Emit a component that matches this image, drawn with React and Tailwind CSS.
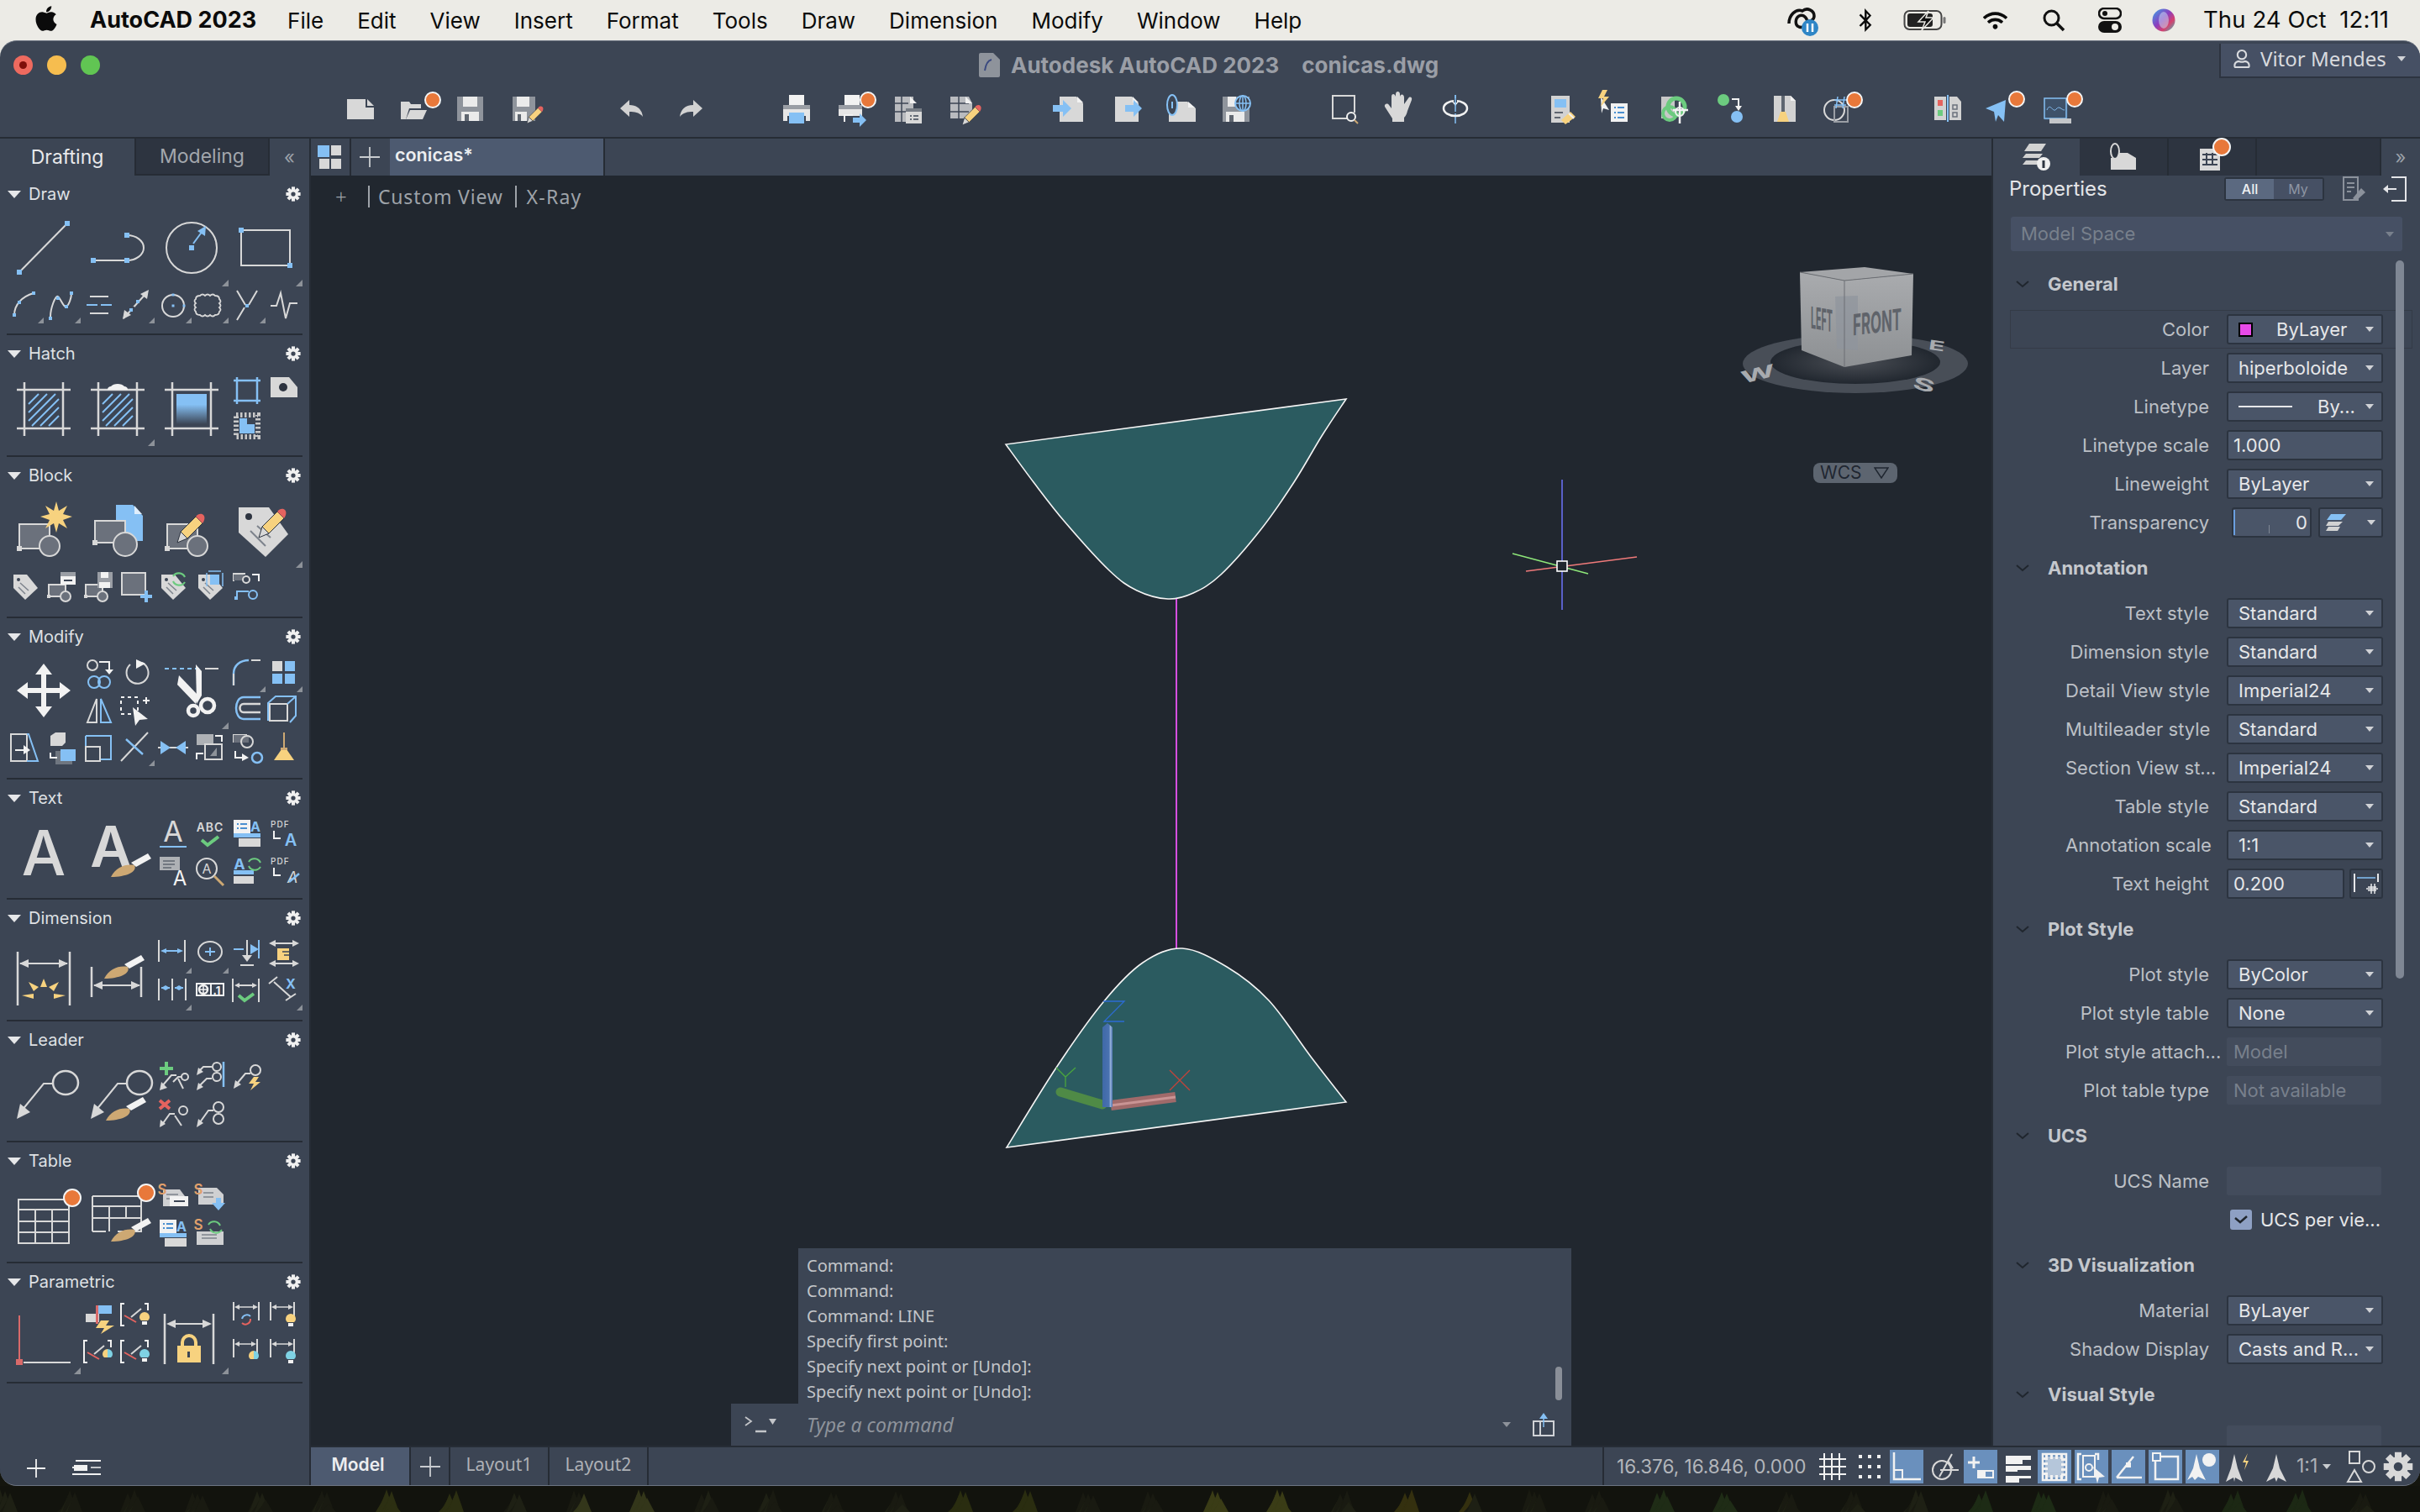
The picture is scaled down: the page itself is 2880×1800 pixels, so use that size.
import { FaApple, FaBluetoothB, FaWifi, FaRegUser } from "react-icons/fa"

const G = "#d8d8d8"
const B = "#85c0f4"
const Y = "#f7d27f"
const O = "#e8783a"
const GR = "#6ccb7f"
const R = "#e5635f"
const T = "#cda873"
const D = "#6b717c"
const W = "#f2f2f2"

const L = (d, c = G, w = 2) => <path d={d} fill="none" stroke={c} strokeWidth={w} />
const F = (d, c = G) => <path d={d} fill={c} />
const Sq = (x, y, c = B, s = 6) => <rect x={x - s / 2} y={y - s / 2} width={s} height={s} fill={c} />
const Ci = (x, y, r, c = G, w = 2, f = "none") => <circle cx={x} cy={y} r={r} fill={f} stroke={c} strokeWidth={w} />
const Rc = (x, y, w, h, c = G) => <rect x={x} y={y} width={w} height={h} fill={c} />
const Dot = (x, y, r = 9) => <circle cx={x} cy={y} r={r} fill={O} stroke="#f4f4f4" strokeWidth="2" />

// pencil pointing down-left, tip at x,y
const Pencil = (x, y, k = 1) => (
  <g transform={`translate(${x} ${y}) scale(${k})`}>
    <path d="M0 0 4-13 12-5Z" fill={G} stroke="#2d3440" strokeWidth="1" />
    <path d="M4-13 22-31 30-23 12-5Z" fill={Y} stroke="#2d3440" strokeWidth="1" />
    <path d="M22-31c3-4 7-4 9-2s2 6-1 10Z" fill={R} />
  </g>
)
const Brush = (x, y, k = 1) => (
  <g transform={`translate(${x} ${y}) scale(${k})`}>
    <path d="M0 0C6-12 18-16 28-14 32-6 18 0 0 0Z" fill={T} />
    <path d="M24-17 44-28 48-22 30-12Z" fill={W} />
  </g>
)
const Tri = <path d="M44 37v7h-7z" fill="#8d9299" />
const TriB = <path d="M88 80v8h-8z" fill="#8d9299" />

function Ic({ s = 44, tri, children }) {
  return (
    <svg width={s} height={s} viewBox={`0 0 ${s} ${s}`} className="block overflow-visible">
      {children}
      {tri && (s === 44 ? Tri : TriB)}
    </svg>
  )
}
function Gear({ s = 18, c = "#f0f0f0" }) {
  return (
    <svg width={s} height={s} viewBox="0 0 24 24" className="block">
      {[0, 45, 90, 135, 180, 225, 270, 315].map((a) => (
        <rect key={a} x="9.300" y="0.500" width="5.400" height="7" fill={c} transform={`rotate(${a} 12 12)`} />
      ))}
      <circle cx="12" cy="12" r="8" fill={c} />
      <circle cx="12" cy="12" r="3.500" fill="#3c4554" />
    </svg>
  )
}
const big = (d, tri) => ({ b: true, d, tri })
const sm = (d, tri) => ({ d, tri })
const gap = { gap: true }

const HFrame = L("M12 21H76M12 67H76M21 12V76M67 12V76", G, 2.5)
const Hatch = (
  <g stroke={B} strokeWidth="2">
    <path d="M26 38 38 26M26 48 48 26M26 58 58 26M30 64 62 32M40 64 62 42M50 64 62 52" />
  </g>
)
const Blk = (
  <>
    <rect x="15" y="36" width="36" height="29" fill={D} stroke={G} strokeWidth="2" />
    {Sq(15, 65, G, 6)}
    {Ci(51, 62, 12, G, 2, D)}
  </>
)
const SBlk = (x, y) => (
  <g transform={`translate(${x} ${y})`}>
    <rect x="0" y="6" width="20" height="14" fill={D} stroke={G} strokeWidth="2" />
    {Sq(0, 20, G, 4)}
    {Ci(20, 20, 6, G, 2, D)}
  </g>
)
const TagS = (
  <>
    {F("M8 8H24L37 24 22 38 8 24Z")}
    {Ci(14, 14, 2, "#3c4554", 0, "#3c4554")}
    {L("M16 18 26 27M14 23 22 31", "#7d838c", 1.5)}
  </>
)
const Bulb = (x, y, c) => (
  <>
    <path d={`M${x - 6} ${y}a6 6 0 0 1 12 0c0 2-1 3-2 4h-8c-1-1-2-2-2-4Z`} fill={c} />
    <rect x={x - 3} y={y + 5} width="6" height="4" fill={W} />
  </>
)
const Conflict = (
  <>
    {L("M8 4H4V30H8M32 4H36V12", W, 2)}
    {L("M8 18 22 26", R, 2)}
    {L("M16 20 28 10", G, 2)}
  </>
)
const Dim = (x1, x2, y = 8, c = G) => (
  <>
    {L(`M${x1} 2V24M${x2} 2V24`, G, 2)}
    {L(`M${x1 + 3} ${y}H${x2 - 3}`, c, 1.5)}
    {F(`M${x1 + 1} ${y} ${x1 + 7} ${y - 3}V${y + 3}Z`, c)}
    {F(`M${x2 - 1} ${y} ${x2 - 7} ${y - 3}V${y + 3}Z`, c)}
  </>
)
const LeaderS = (
  <>
    {L("M8 34 20 20H26", G, 2)}
    {F("M6 38 8 28 15 35Z")}
  </>
)

const panels = [
  {
    name: "Draw",
    h: "h-[190px]",
    cells: [
      big(<>{L("M15 71 72 13")}{Sq(15, 71)}{Sq(72, 13)}</>),
      big(<>{L("M15 57H55")}{L("M55 27a20 15 0 0 1 0 30")}{Sq(15, 57)}{Sq(55, 57)}{Sq(55, 27)}</>),
      big(<>{Ci(44, 42, 30)}{Sq(44, 42)}{L("M46 37 57 22", B)}{F("M61 16 60 28 51 22Z", B)}</>, true),
      big(<>{L("M15 21H73V63H15Z")}{Sq(15, 21)}{Sq(73, 63)}</>, true),
      sm(<>{L("M9 34C9 22 18 12 32 8", G, 2)}{Sq(9, 34, B, 4)}{Sq(15, 19, B, 4)}{Sq(32, 8, B, 4)}</>, true),
      sm(<>{L("M8 36C8 26 14 10 17 12S24 26 27 24 33 14 33 8", G, 2)}{Sq(8, 38, B, 4)}{Sq(17, 14, B, 4)}{Sq(27, 24, B, 4)}{Sq(33, 8, B, 4)}</>, true),
      sm(<>{L("M11 12H33")}{L("M7 22H37", B, 2)}{L("M20 22H24", "#3c4554", 2)}{L("M11 32H33")}</>),
      sm(<>{L("M7 38 35 7")}{F("M37 4 35 15 27 9Z")}{F("M6 39 8 28 16 34Z")}{Sq(17, 27, "#3c4554", 6)}{Sq(16, 28, B, 4)}{Sq(24, 18, B, 4)}</>, true),
      sm(<>{Ci(22, 23, 13)}{Sq(22, 10, B, 3)}{Sq(22, 23, B, 3)}{Sq(35, 23, B, 3)}</>, true),
      sm(<>{L("M10 11q3-3 6 0q3-3 6 0q3-3 6 0q5 0 5 4q3 3 0 5q3 3 0 5q3 3 0 5q0 4-5 4q-3 3-6 0q-3 3-6 0q-3 3-6 0q-5 0-5-4q-3-3 0-5q-3-3 0-5q-3-3 0-5q0-4 5-4Z", G, 1.8)}</>, true),
      sm(<>{L("M10 5 20 22M34 5 24 22M19 25 10 40")}{Sq(22, 23, B, 4)}</>, true),
      sm(<>{L("M6 23H13L18 8 24 38 29 20H38")}</>),
    ],
  },
  {
    name: "Hatch",
    h: "h-[145px]",
    cells: [
      big(<>{HFrame}{Hatch}</>),
      big(<>{HFrame}{Hatch}{F("M32 21c0-3 2-4 4-4 3-4 13-4 16 0 2 0 4 1 4 4Z", W)}</>, true),
      big(
        <>
          <defs>
            <linearGradient id="hg" x1="0" y1="0" x2="0" y2="1">
              <stop offset="0" stopColor="#85c0f4" />
              <stop offset="0.35" stopColor="#85c0f4" />
              <stop offset="1" stopColor="#3c4554" />
            </linearGradient>
          </defs>
          {HFrame}
          <rect x="26" y="26" width="36" height="36" fill="url(#hg)" />
        </>,
      ),
      sm(<>{L("M6 10H38M6 34H38M10 6V38M34 6V38", B, 2.5)}</>),
      sm(<>{F("M6 6H28L38 18V30H6Z")}<circle cx="21" cy="18" r="5" fill="#2d3440" /></>),
      sm(<><rect x="9" y="7" width="26" height="26" fill="none" stroke="#c8c8c8" strokeWidth="6" strokeDasharray="2.500 2.500" />{F("M13 11H22V18H31V29H13Z", B)}</>),
    ],
  },
  {
    name: "Block",
    h: "h-[192px]",
    cells: [
      big(<>{Blk}{F("M59 9 62 20 72 14 67 24 78 27 67 31 72 41 62 35 59 46 56 35 46 41 51 31 40 27 51 24 46 14 56 20Z", Y)}</>),
      big(
        <>
          {F("M42 13H62L74 26V56H42Z", B)}
          {F("M64 14 73 24H64Z", "#dfeefc")}
          <rect x="17" y="32" width="36" height="26" fill={D} stroke={G} strokeWidth="2" />
          {Sq(17, 58, G, 6)}
          {Ci(53, 60, 14, G, 2, D)}
        </>,
      ),
      big(<>{Blk}{Pencil(27, 58, 1)}</>),
      big(
        <>
          {F("M12 16H48L71 48 44 75 12 46Z")}
          {Ci(24, 27, 4, "#2d3440", 0, "#2d3440")}
          {L("M34 38 50 52M26 44 44 62", "#7d838c", 2)}
          {Pencil(36, 52, 1)}
        </>,
        true,
      ),
      sm(TagS),
      sm(<>{SBlk(6, 14)}{Rc(20, 5, 18, 5, "#9a9ea5")}{Rc(20, 10, 18, 10, W)}{L("M24 15H34", "#3c4554", 2)}</>),
      sm(<>{SBlk(6, 14)}{F("M20 5H38V24H20Z", "#9a9ea5")}{Rc(24, 5, 9, 7, W)}{Rc(22, 17, 13, 7, W)}</>),
      sm(<><rect x="5" y="6" width="28" height="26" fill={D} stroke={G} strokeWidth="2" />{F("M27 32H32V27H36V32H41V36H36V41H32V36H27Z", B)}</>),
      sm(<>{TagS}{L("M22 10a8 8 0 0 1 14 1M36 17a8 8 0 0 1-14-1", GR, 2.2)}</>),
      sm(<>{TagS}<rect x="22" y="8" width="11" height="12" fill={B} />{L("M18 6V22M37 6V22M20 4H35", B, 1.5)}</>),
      sm(<>{L("M6 16V7H20", G, 2)}{Rc(6, 8, 12, 7, D)}{Ci(21, 14, 4)}{L("M28 8h8v8", W, 2)}{L("M10 36V28H24", B, 2)}{Ci(29, 32, 5, B)}{Sq(9, 36, B, 4)}</>),
      gap,
    ],
  },
  {
    name: "Modify",
    h: "h-[192px]",
    cells: [
      big(<>{F("M44 10 54 23H47V39H63V32L76 42 63 52V45H47V61H54L44 74 34 61H41V45H25V52L12 42 25 32V39H41V23H34Z", W)}</>),
      sm(<>{Ci(14, 12, 6)}{L("M22 8H34V18", W, 2)}{F("M29 17H39L34 23Z", W)}{Ci(16, 32, 7, B)}{Ci(28, 32, 7, B)}</>),
      sm(<>{L("M29 9a13 13 0 1 1-14 2", G, 2)}{F("M22 5 33 10 22 16Z", W)}</>),
      big(
        <>
          <path d="M12 16H53" stroke={B} strokeWidth="2" strokeDasharray="5 4" />
          {L("M60 16H76", G, 2)}
          {F("M49 11 56 19V48L50 58Z", W)}
          {F("M29 24 52 48 49 58 27 35Z", W)}
          {Ci(46, 66, 6, W, 4.5)}
          {Ci(63, 60, 8, W, 4.5)}
        </>,
        true,
      ),
      sm(<>{L("M6 36V22C6 12 14 6 24 6", B, 2.5)}{L("M6 22V36", G, 2)}{L("M27 6H38", G, 2)}</>, true),
      sm(<>{Rc(8, 7, 12, 12)}{Rc(23, 7, 12, 12, B)}{Rc(8, 22, 12, 12, B)}{Rc(23, 22, 12, 12, B)}</>, true),
      sm(<>{L("M19 8 8 36H19Z")}{L("M24 8 36 36H24Z", B)}</>),
      sm(<><path d="M4 6H24V26H4Z" fill="none" stroke={W} strokeWidth="2" strokeDasharray="4 4" />{F("M18 18 36 32 26 33 21 40Z", W)}{L("M30 10H38M34 6V14", W, 2)}</>),
      sm(<>{L("M38 6H18C6 6 6 32 18 32H38", B, 2.5)}{L("M38 14H18C12 14 12 24 18 24H38", G, 2.5)}</>),
      sm(<>{L("M5 14H26V34H5Z", G, 2)}{L("M3 34V13L12 5H36V28L29 36M26 14 36 5", B, 2)}</>),
      sm(<>{L("M5 6H24V38H5Z", G, 2)}{L("M24 6H26L37 38H24", B, 2)}{L("M10 25H22", W, 2)}{F("M20 19 28 25 20 30Z", W)}</>),
      sm(<>{F("M8 8 14 4H26V16L22 20H8Z", G)}{F("M14 26H34V42H14Z", "#6f7680")}{Rc(20, 24, 18, 14, B)}{L("M8 28V34H16", W, 2)}</>),
      sm(<>{L("M6 8H36V36H24", B, 2)}{L("M6 24V8", B, 2)}{L("M6 21H23V38H6Z")}</>),
      sm(<>{L("M4 38 36 4")}{L("M10 12 30 30", B, 2.5)}</>, true),
      sm(<>{L("M4 22H40")}{F("M7 14 19 22 7 30Z", B)}{F("M37 14 25 22 37 30Z", B)}</>),
      sm(<>{Rc(6, 6, 20, 13, "#aeb1b5")}{L("M16 18H36V36H16Z")}{F("M22 32 30 22V32Z", "#8d9299")}{L("M28 8H36V15", W, 2)}{L("M6 36V29H14", W, 2)}</>),
      sm(<>{L("M6 16V7H22", G, 2)}{Rc(6, 7, 18, 9, D)}{Ci(22, 15, 7)}{L("M8 26V34H18", W, 2)}{F("M16 29 24 34 16 38Z", W)}{Ci(34, 34, 6, B, 2.5)}</>),
      sm(<>{Rc(21, 4, 2, 20, T)}{F("M19 24H25L34 37H10Z", Y)}{Rc(18, 22, 8, 3, T)}</>),
    ],
  },
  {
    name: "Text",
    h: "h-[143px]",
    cells: [
      big(<><text x="44" y="70" textAnchor="middle" fontFamily="Inter" fontWeight="500" fontSize="74" fill={G}>A</text></>),
      big(<><text x="36" y="60" textAnchor="middle" fontFamily="Inter" fontWeight="600" fontSize="68" fill={G}>A</text>{Brush(36, 72, 1)}</>),
      sm(<><text x="22" y="30" textAnchor="middle" fontFamily="Inter" fontSize="34" fill={G}>A</text>{L("M6 36H38", B, 2)}</>),
      sm(<><text x="22" y="18" textAnchor="middle" fontFamily="Inter" fontWeight="600" fontSize="14" letterSpacing="1" fill={G}>ABC</text>{L("M12 28 19 34 32 24", GR, 4)}</>),
      sm(<>{Rc(6, 4, 20, 16, W)}{L("M10 9H12M14 9H22M10 14H12M14 14H22", "#4a8fd0", 2)}<text x="32" y="18" textAnchor="middle" fontFamily="Inter" fontWeight="700" fontSize="16" fill={B}>A</text>{Rc(6, 20, 32, 5, B)}{Rc(12, 26, 26, 10)}</>),
      sm(<><text x="6" y="13" fontFamily="Inter" fontWeight="500" fontSize="10" letterSpacing="1" fill={G}>PDF</text>{L("M10 17V26H18", W, 2)}<text x="30" y="35" textAnchor="middle" fontFamily="Inter" fontWeight="600" fontSize="20" fill={B}>A</text></>),
      sm(<>{Rc(6, 4, 24, 16, "#aeb1b5")}{L("M10 9H24M10 13H24M10 17H20", "#5f6670", 1.5)}<text x="30" y="38" textAnchor="middle" fontFamily="Inter" fontSize="24" fill={W}>A</text></>),
      sm(<>{Ci(18, 18, 12)}<text x="18" y="24" textAnchor="middle" fontFamily="Inter" fontSize="16" fill={G}>A</text>{L("M27 27 38 38", T, 3)}</>),
      sm(<><text x="13" y="19" textAnchor="middle" fontFamily="Inter" fontWeight="700" fontSize="18" fill={B}>A</text>{Rc(6, 20, 24, 5, B)}{Rc(6, 27, 24, 9)}{L("M24 10a8 8 0 0 1 14 1M38 16a8 8 0 0 1-14-1", GR, 2)}</>),
      sm(<><text x="6" y="13" fontFamily="Inter" fontWeight="500" fontSize="10" letterSpacing="1" fill={G}>PDF</text>{L("M10 17V26H18", W, 2)}<text x="26" y="35" fontFamily="Inter" fontStyle="italic" fontSize="18" fill={G}>A</text>{L("M28 34 40 24", B, 2.5)}</>),
    ],
  },
  {
    name: "Dimension",
    h: "h-[145px]",
    cells: [
      big(
        <>
          {L("M13 18V82M75 18V82", G, 2.5)}
          {L("M16 32H72")}
          {F("M15 32 26 27V37Z")}
          {F("M73 32 62 27V37Z")}
          {F("M44 50 48 60H40Z", Y)}
          {F("M26 54 38 60 32 65Z", Y)}
          {F("M62 54 50 60 56 65Z", Y)}
          {F("M18 70 32 68V74Z", Y)}
          {F("M70 70 56 68V74Z", Y)}
        </>,
      ),
      big(<>{L("M13 36V72M72 36V72", G, 2.5)}{L("M16 58H70")}{F("M15 58 26 53V63Z")}{F("M71 58 60 53V63Z")}{Brush(28, 50, 1)}</>),
      sm(<>{L("M5 4V30M36 4V30", G, 2)}{L("M9 17H32", B, 2)}{F("M7 17 14 14V20Z", B)}{F("M34 17 27 14V20Z", B)}</>, true),
      sm(<><ellipse cx="22" cy="18" rx="14" ry="12" fill="none" stroke={G} strokeWidth="2" />{L("M16 18H28M22 13V23", B, 2)}</>, true),
      sm(<>{L("M6 15H18M36 4V26", B, 2)}{L("M22 4V26", G, 2)}{F("M26 9 36 15 26 21Z", B)}{F("M16 22H28L22 30Z")}{L("M14 34H30")}</>),
      sm(<>{L("M6 8H38M6 32H38", G, 2)}{F("M4 8 12 4V12Z")}{F("M40 8 32 4V12Z")}{F("M4 32 12 28V36Z")}{F("M40 32 32 28V36Z")}{Rc(14, 14, 14, 14, Y)}{L("M20 18H28M22 22H28", "#3c4554", 1.5)}</>),
      sm(<>{L("M5 6V32M21 6V32M37 6V32", G, 2)}{L("M8 17H18M24 17H34", B, 2)}{F("M8 17 13 14V20Z", B)}{F("M18 17 13 14V20Z", B)}{F("M24 17 29 14V20Z", B)}{F("M34 17 29 14V20Z", B)}</>, true),
      sm(<><rect x="6" y="12" width="32" height="14" fill="none" stroke={W} strokeWidth="2" />{L("M23 12V26", W, 2)}{Ci(14, 19, 5, W, 2.5)}{L("M8 19H20M14 13V25", W, 1.5)}<text x="30" y="25" textAnchor="middle" fontFamily="Inter" fontWeight="700" fontSize="13" fill={W}>.1</text></>),
      sm(<>{L("M5 6V34M36 6V34", G, 2)}{L("M9 14H32")}{F("M7 14 13 11V17Z")}{F("M34 14 28 11V17Z")}{L("M12 26 19 32 30 24", GR, 4)}</>),
      sm(<>{L("M4 12 14 4M24 32 36 24M10 10 30 28", G, 2)}<text x="30" y="18" textAnchor="middle" fontFamily="Inter" fontWeight="700" fontSize="16" fill={B}>X</text></>, true),
    ],
  },
  {
    name: "Leader",
    h: "h-[144px]",
    cells: [
      big(<>{L("M18 62 44 30H56")}{F("M12 72 16 54 28 64Z")}<ellipse cx="70" cy="29" rx="15" ry="14" fill="none" stroke={G} strokeWidth="2.5" /></>),
      big(<>{L("M18 62 44 30H56")}{F("M12 72 16 54 28 64Z")}<ellipse cx="70" cy="29" rx="15" ry="14" fill="none" stroke={G} strokeWidth="2.5" />{Brush(30, 74, 1)}</>),
      sm(<>{L("M6 12H22M14 4V20", GR, 4)}{LeaderS}{L("M22 28 28 22H32")}{Ci(36, 22, 4)}{L("M28 24 34 36")}</>),
      sm(<>{L("M10 14 14 10H24")}{F("M6 20 8 11 14 16Z")}{L("M10 32 18 24H24")}{F("M6 38 8 29 14 34Z")}{Ci(30, 10, 5)}{Ci(30, 22, 5)}{L("M38 4V34", B, 2.5)}</>),
      sm(<>{L("M10 30 20 18H26")}{F("M6 36 8 26 15 31Z")}{Ci(32, 14, 6)}{F("M30 22 36 22 32 28H38L26 38 30 30H24Z", Y)}</>),
      gap,
      sm(<>{L("M6 6 18 16M18 6 6 16", R, 4)}{L("M8 36 18 22H24")}{F("M6 38 7 29 13 34Z")}{Ci(34, 18, 5)}{L("M24 24 32 36")}</>),
      sm(<>{L("M10 32 20 18H26")}{F("M6 38 8 28 14 33Z")}{Ci(32, 14, 6)}{Ci(32, 28, 6)}</>),
    ],
  },
  {
    name: "Table",
    h: "h-[144px]",
    cells: [
      big(<>{L("M14 24H74V76H14ZM14 36H74M14 50H74M14 63H74M34 36V76M54 36V76", G, 2)}{Dot(78, 22, 10)}</>),
      big(<>{L("M14 20H72V62H44M14 62H30M14 20V62M14 32H72M14 46H72M34 32V62M54 32V46", G, 2)}{Dot(78, 16, 10)}{Brush(36, 74, 1)}</>),
      sm(<>{F("M10 12H30L36 20V32H10Z", "#cfd0d2")}{L("M14 18H28M14 23H28", "#7d838c", 1.5)}<text x="9" y="18" textAnchor="middle" fontFamily="Inter" fontWeight="600" fontSize="17" fill="#e0a06b">S</text>{Rc(18, 20, 22, 12, W)}{L("M23 26H36", "#3c4554", 2)}</>),
      sm(<>{F("M8 10H30L38 18V30H8Z", "#cfd0d2")}{L("M14 16H26M14 21H26", "#7d838c", 1.5)}<text x="8" y="18" textAnchor="middle" fontFamily="Inter" fontWeight="600" fontSize="17" fill="#e0a06b">S</text>{F("M29 22H35V28H40L32 37 24 28H29Z", B)}</>),
      gap,
      gap,
      sm(<>{Rc(6, 4, 20, 16, W)}{L("M10 9H12M14 9H22M10 14H12M14 14H22", "#4a8fd0", 2)}<text x="32" y="18" textAnchor="middle" fontFamily="Inter" fontWeight="700" fontSize="16" fill={B}>A</text>{Rc(6, 20, 32, 5, B)}{Rc(12, 26, 26, 10)}</>),
      sm(<>{F("M6 18H38V34H6Z", "#cfd0d2")}{L("M12 22H30M12 26H30", "#7d838c", 1.5)}<text x="8" y="16" textAnchor="middle" fontFamily="Inter" fontWeight="600" fontSize="17" fill="#e0a06b">S</text>{L("M20 10a8 8 0 0 1 14 1M36 16a8 8 0 0 1-14-1", GR, 2)}</>),
    ],
  },
  {
    name: "Parametric",
    h: "h-[143px]",
    cells: [
      big(<>{Rc(14, 18, 2, 56, "#d96a6a")}{Rc(11, 70, 8, 7, "#d96a6a")}{L("M20 74H76")}</>, true),
      sm(<>{Rc(6, 16, 16, 10)}{Rc(18, 6, 3, 22, "#d96a6a")}{Rc(21, 6, 16, 10, B)}{F("M24 24H34L30 30H40L24 40 28 33H18Z", Y)}</>),
      sm(<>{Conflict}{Bulb(32, 20, Y)}</>),
      big(
        <>
          {L("M12 16V76M70 16V76", G, 2.5)}
          {L("M16 28H66")}
          {F("M14 28 25 23V33Z")}
          {F("M68 28 57 23V33Z")}
          <path d="M33 56v-6a8 8 0 0 1 16 0v6" fill="none" stroke={Y} strokeWidth="4" />
          <rect x="27" y="54" width="28" height="20" fill={Y} />
          <rect x="39" y="61" width="3" height="7" fill="#3c4554" />
        </>,
        true,
      ),
      sm(<>{Dim(6, 36)}{L("M16 22a6 6 0 0 1 10-3", B, 2)}{L("M26 22a6 6 0 0 1-10 5", R, 2)}</>),
      sm(<>{Dim(6, 34)}{Bulb(30, 22, Y)}</>),
      sm(<>{Conflict}<path d="M32 14a6 6 0 0 0-6 6c0 2 1 3 2 4h4Z" fill={Y} /><path d="M32 14a6 6 0 0 1 6 6c0 2-1 3-2 4h-4Z" fill="#7fd2e4" /></>),
      sm(<>{Conflict}{Bulb(32, 20, "#7fd2e4")}</>),
      sm(<>{Dim(6, 34)}<path d="M30 16a6 6 0 0 0-6 6c0 2 1 3 2 4h4Z" fill={Y} /><path d="M30 16a6 6 0 0 1 6 6c0 2-1 3-2 4h-4Z" fill="#7fd2e4" /></>),
      sm(<>{Dim(6, 34)}{Bulb(30, 22, "#7fd2e4")}</>),
    ],
  },
]

function PanelHead({ name }) {
  return (
    <div className="flex h-[44px] items-center justify-between pl-[9px] pr-[10px]">
      <div className="flex items-center gap-[9px]">
        <span className="block h-0 w-0 border-x-[8px] border-t-[9px] border-x-transparent border-t-[#e6e7e9]"></span>
        <span className="text-[20px] text-[#dfe1e4]">{name}</span>
      </div>
      <Gear />
    </div>
  )
}

function LeftPanel() {
  return (
    <div className="flex w-[368px] shrink-0 flex-col rounded-bl-[20px] bg-[#3c4554]">
      <div className="flex h-[44px] shrink-0">
        <div className="flex w-[160px] items-center justify-center text-[23px] text-[#e8e9eb]">Drafting</div>
        <div className="flex w-[161px] items-center justify-center border-x-2 border-b-2 border-[#262c35] bg-[#2d3440] text-[23px] text-[#a3a7ad]">Modeling</div>
        <div className="flex flex-1 items-center justify-center text-[22px] text-[#9aa0a8]">«</div>
      </div>
      {panels.map((p) => (
        <div key={p.name} className={`mx-[8px] shrink-0 border-b-2 border-[#262c35] ${p.h}`}>
          <div className="-mx-[8px]">
            <PanelHead name={p.name} />
          </div>
          <div className="grid w-[352px] grid-cols-[repeat(8,44px)] auto-rows-[44px]">
            {p.cells.map((c, i) =>
              c.gap ? (
                <div key={i}></div>
              ) : (
                <div key={i} className={c.b ? "col-span-2 row-span-2" : ""}>
                  <Ic s={c.b ? 88 : 44} tri={c.tri}>
                    {c.d}
                  </Ic>
                </div>
              ),
            )}
          </div>
        </div>
      ))}
      <div className="flex flex-1 items-end pb-[7px] pl-[30px]">
        <svg width="100" height="26" viewBox="0 0 100 26" className="block">
          {L("M2 13H24M13 2V24", W, 1.8)}
          {L("M60 4H90M56 12H74", W, 2)}
          {Rc(58, 9, 16, 7, W)}
          {L("M56 20H90", W, 2)}
          {L("M78 12H90", W, 1.5)}
        </svg>
      </div>
    </div>
  )
}

const toolbarGroups = [
  [
    <>{F("M18 17H40V27H50V41H18Z")}{F("M42 17 50 25H42Z")}</>,
    <>{F("M16 20H26L28 23H40V28H26L22 41H16Z")}{F("M27 30H47L42 41H22Z")}{Dot(54, 18)}</>,
    <>{F("M17 14H48V43H17Z", "#8f949c")}{Rc(24, 14, 17, 12, "#ebebeb")}{Rc(22, 32, 21, 11, "#ebebeb")}{Rc(26, 35, 5, 8, "#5f6670")}</>,
    <>{F("M17 14H44V43H17Z", "#8f949c")}{Rc(22, 14, 15, 12, "#ebebeb")}{Rc(20, 32, 14, 11, "#ebebeb")}{Rc(23, 35, 4, 8, "#5f6670")}{Pencil(34, 46, 0.6)}</>,
  ],
  [
    F("M17 28 28 18V24C38 24 43 30 44 38 40 33 35 32 28 32V38Z", "#d2d2d2"),
    <g transform="matrix(-1 0 0 1 66 0)">{F("M17 28 28 18V24C38 24 43 30 44 38 40 33 35 32 28 32V38Z", "#d2d2d2")}</g>,
  ],
  [
    <>{Rc(24, 12, 18, 12, W)}{Rc(17, 24, 32, 5, "#9a9ea5")}{Rc(17, 29, 32, 8, "#e6e6e6")}{Rc(17, 37, 5, 6, "#e6e6e6")}{Rc(44, 37, 5, 6, "#e6e6e6")}{Rc(24, 33, 18, 13, B)}</>,
    <>{Rc(24, 12, 18, 12, W)}{Rc(17, 24, 28, 5, "#9a9ea5")}{Rc(17, 29, 28, 8, "#e6e6e6")}{L("M24 44V36H34", W, 2)}{F("M34 39H42V34L50 42 42 50V45H34Z", B)}{Dot(52, 18)}</>,
    <>{F("M18 14H40V33H34V44H18Z", "#b9bbbf")}{L("M18 22H34M18 32H34M26 14V44", "#3c4554", 1.5)}{F("M36 14 44 22H36Z", W)}{F("M31 28H50V46H31Z", "#d8d8d8")}{Rc(31, 28, 19, 4, "#777d86")}{L("M36 37H38M40 37H46M36 41H38M40 41H46", "#3c4554", 1.5)}</>,
    <>{F("M18 14H40L44 22V40H18Z", "#b9bbbf")}{L("M18 22H40M18 32H40M28 14V44", "#3c4554", 1.5)}{F("M36 14 44 22H36Z", W)}{Pencil(32, 48, 0.7)}</>,
  ],
  [
    <>{F("M20 14H40L48 22V44H20Z")}{F("M41 14 48 21H41Z", W)}{F("M12 24H24V18L34 28 24 38V32H12Z", B)}</>,
    <>{F("M20 14H40L48 22V44H20Z")}{F("M41 14 48 21H41Z", W)}{F("M32 24H42V18L52 28 42 38V32H32Z", B)}</>,
    <>{F("M24 20H40L50 28V44H18V30H24Z")}{F("M41 20 49 27H41Z", W)}<ellipse cx="22" cy="24" rx="6" ry="12" fill="#3c4554" stroke={B} strokeWidth="2" />{L("M22 20V28", B, 2)}</>,
    <>{F("M16 14H48V44H16Z", "#8f949c")}{Rc(22, 14, 10, 12, "#ebebeb")}{Rc(20, 32, 22, 12, "#ebebeb")}{Rc(24, 36, 5, 8, "#5f6670")}{Ci(40, 22, 9, B, 2, "#3c4554")}{L("M31 22H49M40 13V31", B, 1.5)}<ellipse cx="40" cy="22" rx="4" ry="9" fill="none" stroke={B} strokeWidth="1.5" /></>,
  ],
  [
    <>{L("M36 40H19V13H45V33", G, 2)}{Ci(41, 38, 5, W, 2)}{L("M45 42 49 46", T, 2)}</>,
    <path d="M24 40 15 26c-1-3 3-5 5-2l3 4V14c0-4 4-4 5 0v-3c0-4 5-4 5 0v3c1-4 5-3 5 1v8l5-7c2-3 5-1 4 2l-5 13c-1 4-2 6-4 8v5H24Z" fill="#d8d8d8" />,
    <>{L("M33 12V22M33 34V46", B, 1.5)}<ellipse cx="33" cy="28" rx="14" ry="9" fill="none" stroke={W} strokeWidth="2.5" />{F("M29 20 37 20 33 25Z", W)}{Rc(31, 16, 4, 5, "#3c4554")}{L("M33 12V32", B, 1.5)}</>,
  ],
  [
    <>{F("M19 13H41V45H19Z", "#d2d2d2")}{Rc(23, 17, 14, 10, B)}{L("M23 33H33M23 39H30", "#5f6670", 2)}{F("M36 47 31 42 42 32 48 38Z", Y)}{L("M40 34 46 40", W, 2)}</>,
    <>{F("M12 14 22 30 15 28 13 34Z", W)}{F("M14 6 20 6 16 14 22 14 12 26 15 16H9Z", Y)}{F("M24 22H44V44H24Z", W)}{L("M28 27H30M32 27H40M28 33H30M32 33H40M28 39H30M32 39H40", "#4a8fd0", 2)}</>,
    <>{F("M18 14H34V40H18Z", "#c8c8c8")}{Ci(36, 26, 10, GR, 5)}{Ci(28, 34, 8, GR, 4)}{L("M32 30H50M40 20V46", W, 2.5)}{Ci(40, 32, 5, W, 2)}</>,
    <>{Ci(26, 18, 7, GR, 0, GR)}{Ci(42, 38, 7, B, 0, B)}{L("M36 17H44V26", W, 2)}{F("M40 25H48L44 31Z", W)}</>,
    <>{F("M20 13H40L46 19V44H20Z", "#d2d2d2")}{F("M40 13 46 19H40Z", W)}{Rc(29, 13, 4, 20, "#5f6670")}{F("M28 32H34L38 44H24Z", Y)}</>,
    <>{Ci(26, 30, 12, G, 2)}{L("M26 26H42V44H26Z", "#9a9ea5", 2)}{L("M30 14 28 28M38 14 36 28M26 18H40M26 24H40", B, 1.5)}{Dot(50, 18)}</>,
  ],
  [
    <>{F("M17 14H31V42H17Z", "#d2d2d2")}{F("M35 14H44L49 20V42H35Z", "#d2d2d2")}{L("M33 12V44", B, 2)}{Rc(21, 18, 6, 7, R)}{Rc(21, 30, 6, 7, GR)}{L("M39 24H44V29H39ZM39 33H44V38H39Z", "#6b717c", 1.5)}</>,
    <>{F("M12 28 36 18 34 44 27 36 24 44 22 32Z", B)}{Dot(49, 17)}</>,
    <>{Rc(16, 16, 28, 26, "#3e5169")}<rect x="16" y="16" width="26" height="24" fill="#3e5169" stroke={B} strokeWidth="1.5" />{L("M19 30C23 20 26 34 30 29S36 30 40 30", B, 1)}{Rc(22, 40, 26, 6, "#c4c6c9")}{Dot(52, 17)}</>,
  ],
]

function Toolbar() {
  return (
    <div className="flex h-[62px] shrink-0 gap-[62px] pl-[395px]">
      {toolbarGroups.map((g, i) => (
        <div key={i} className="flex">
          {g.map((d, j) => (
            <svg key={j} width="66" height="56" viewBox="0 0 66 56" className="block overflow-visible">
              {d}
            </svg>
          ))}
        </div>
      ))}
    </div>
  )
}

function Caret({ c = "border-t-[#d0d2d6]" }) {
  return <span className={`block h-0 w-0 border-x-[5px] border-t-[6px] border-x-transparent ${c}`}></span>
}

function MacBar() {
  const items = ["File", "Edit", "View", "Insert", "Format", "Tools", "Draw", "Dimension", "Modify", "Window", "Help"]
  return (
    <div className="flex h-[48px] shrink-0 items-center bg-[#ecebe6] pl-[38px] text-[26px] text-[#0b0b0b]">
      <FaApple className="text-[34px] -mt-[4px]" />
      <span className="ml-[35px] text-[27px] font-bold">AutoCAD 2023</span>
      <div className="ml-[37px] flex gap-[40px]">
        {items.map((m) => (
          <span key={m}>{m}</span>
        ))}
      </div>
      <div className="ml-auto flex items-center pr-[37px]">
        <svg width="46" height="40" viewBox="0 0 46 40" className="block">
          <path d="M6 24c0-10 8-18 16-15 6-5 14 0 14 6 0 4-4 7-8 6-2-6-6-8-10-6-5 3-5 11 0 13 3 1 6 0 8-2" fill="none" stroke="#111" strokeWidth="3.5" />
          <circle cx="31" cy="29" r="10" fill="#2f86c6" />
          <path d="M28 24v10M34 24v10" stroke="#fff" strokeWidth="2.5" />
        </svg>
        <span className="ml-[37px] flex w-[28px] justify-center">
          <FaBluetoothB className="text-[28px]" />
        </span>
        <svg width="52" height="26" viewBox="0 0 52 26" className="ml-[31px] block">
          <rect x="1.5" y="2" width="44" height="22" rx="6" fill="none" stroke="#444" strokeWidth="2" />
          <rect x="5" y="5" width="30" height="16" rx="3" fill="#222" />
          <path d="M30 2 18 15H26L22 25 36 10H27Z" fill="#111" stroke="#ecebe6" strokeWidth="1.5" />
          <rect x="47.5" y="9" width="3" height="8" rx="1.5" fill="#777" />
        </svg>
        <span className="ml-[42px] flex w-[32px] justify-center">
          <FaWifi className="text-[29px]" />
        </span>
        <svg width="28" height="28" viewBox="0 0 28 28" className="ml-[39px] block">
          <circle cx="11.5" cy="11.5" r="8.5" fill="none" stroke="#111" strokeWidth="3" />
          <path d="M18 18 26 26" stroke="#111" strokeWidth="3.5" />
        </svg>
        <svg width="28" height="30" viewBox="0 0 28 30" className="ml-[39px] block">
          <rect x="1" y="1" width="26" height="12" rx="6" fill="none" stroke="#111" strokeWidth="2.5" />
          <circle cx="8" cy="7" r="3" fill="#111" />
          <rect x="0" y="16" width="28" height="14" rx="7" fill="#111" />
          <circle cx="20" cy="23" r="4" fill="#ecebe6" />
        </svg>
        <svg width="28" height="28" viewBox="0 0 28 28" className="ml-[36px] block">
          <defs>
            <linearGradient id="si" x1="0" y1="0" x2="1" y2="1">
              <stop offset="0" stopColor="#3aa7e8" />
              <stop offset="0.45" stopColor="#8a3fc0" />
              <stop offset="0.7" stopColor="#d6406e" />
              <stop offset="1" stopColor="#35c3c0" />
            </linearGradient>
          </defs>
          <circle cx="14" cy="14" r="13.5" fill="url(#si)" />
          <ellipse cx="14" cy="14" rx="6" ry="10" fill="#cfe3f5" opacity=".5" />
        </svg>
        <span className="ml-[33px] whitespace-pre text-[27.500px] tracking-[0.1px]">Thu 24 Oct  12:11</span>
      </div>
    </div>
  )
}

function TitleRow() {
  return (
    <div className="relative flex h-[52px] shrink-0 items-center pt-[5px]">
      <div className="absolute left-[16px] top-[17px] flex gap-[17px]">
        <span className="flex h-[23px] w-[23px] items-center justify-center rounded-full bg-[#ee6a5f]">
          <span className="h-[9px] w-[9px] rounded-full bg-[#7e0f0a]"></span>
        </span>
        <span className="h-[23px] w-[23px] rounded-full bg-[#f6bd4f]"></span>
        <span className="h-[23px] w-[23px] rounded-full bg-[#61c553]"></span>
      </div>
      <div className="ml-[1165px] flex items-center text-[26px] font-bold text-[#9a9ea6]">
        <svg width="25" height="29" viewBox="0 0 25 29" className="block">
          <path d="M2 0H17L25 8V27A2 2 0 0 1 23 29H2A2 2 0 0 1 0 27V2A2 2 0 0 1 2 0Z" fill="#8e939b" />
          <path d="M7 21C8 14 11 9 15 8" fill="none" stroke="#3b4a80" strokeWidth="2" />
        </svg>
        <span className="ml-[13px]">Autodesk AutoCAD 2023</span>
        <span className="ml-[27px]">conicas.dwg</span>
      </div>
      <div className="absolute right-0 top-[3px] flex h-[41px] w-[239px] items-center border-b-2 border-l-2 border-[#2d3440] bg-[#465064] pb-[3px] pl-[14px] [font-family:'Noto_Sans',sans-serif] text-[24px] text-[#d8dade]">
        <FaRegUser className="text-[22px] text-[#d8dade]" />
        <span className="ml-[11px]">Vitor Mendes</span>
        <span className="ml-[13px]">
          <Caret />
        </span>
      </div>
    </div>
  )
}

function DocTabs() {
  return (
    <div className="flex h-[44px] shrink-0 bg-[#3c4554]">
      <div className="flex w-[48px] items-center justify-center border-r-2 border-[#262c35] pr-[2px]">
        <svg width="28" height="28" viewBox="0 0 28 28" className="block">
          {Rc(0, 0, 14, 14, B)}
          {Rc(16, 0, 12, 12, G)}
          {Rc(2, 16, 12, 12, G)}
          {Rc(16, 16, 12, 12, G)}
        </svg>
      </div>
      <div className="flex w-[46px] items-center justify-center pr-[2px]">
        <svg width="24" height="24" viewBox="0 0 24 24" className="block">
          {L("M0 12H24M12 0V24", "#c9ccd0", 1.8)}
        </svg>
      </div>
      <div className="flex w-[256px] items-center border-r-2 border-[#262c35] bg-[#4d5a70] pb-[6px] pl-[6px] text-[21.500px] font-semibold text-[#eceef0]">conicas*</div>
    </div>
  )
}

const lowerPts = [[1198, 1365], [1257, 1270], [1313, 1192], [1360, 1145], [1407, 1128], [1460, 1150], [1510, 1190], [1560, 1257], [1602, 1311]]
const upperPts = [[1197, 528], [1230, 573], [1267, 620], [1320, 678], [1353, 702], [1390, 712], [1420, 705], [1453, 683], [1500, 630], [1540, 573], [1573, 518], [1602, 474]]

function smooth(p) {
  let d = `M${p[0][0]} ${p[0][1]}`
  for (let i = 0; i < p.length - 1; i++) {
    const a = p[Math.max(i - 1, 0)]
    const b = p[i]
    const c = p[i + 1]
    const e = p[Math.min(i + 2, p.length - 1)]
    d += `C${b[0] + (c[0] - a[0]) / 6} ${b[1] + (c[1] - a[1]) / 6} ${c[0] - (e[0] - b[0]) / 6} ${c[1] - (e[1] - b[1]) / 6} ${c[0]} ${c[1]}`
  }
  return d + "Z"
}

function Drawing() {
  return (
    <svg width="2000" height="1514" viewBox="370 208 2000 1514" className="absolute inset-0 block">
      <defs>
        <linearGradient id="cf" x1="0" y1="0" x2="0" y2="1">
          <stop offset="0" stopColor="#a9abae" />
          <stop offset="1" stopColor="#8d9093" />
        </linearGradient>
        <linearGradient id="cb" x1="0" y1="0" x2="1" y2="0">
          <stop offset="0" stopColor="#3f69a8" />
          <stop offset="0.65" stopColor="#4a72b0" />
          <stop offset="0.8" stopColor="#95b0d8" />
          <stop offset="1" stopColor="#4a72b0" />
        </linearGradient>
        <radialGradient id="sh" cx="0.5" cy="0.5" r="0.5">
          <stop offset="0" stopColor="#4a4e55" />
          <stop offset="1" stopColor="#21272f" />
        </radialGradient>
      </defs>
      <path d={smooth(upperPts)} fill="#2b5b60" stroke="#f4f4f4" strokeWidth="1.6" />
      <path d="M1400 712V1128" stroke="#d64fe0" strokeWidth="2" />
      <path d={smooth(lowerPts)} fill="#2b5b60" stroke="#f4f4f4" strokeWidth="1.6" />

      <path d="M1262 1299 1312 1314" stroke="#4f8a46" strokeWidth="11" strokeLinecap="round" />
      <path d="M1322 1315 1399 1305" stroke="#a06a6a" strokeWidth="12" />
      <path d="M1322 1315 1399 1305" stroke="#c99494" strokeWidth="3" />
      <path d="M1312 1222 1318 1217 1324 1222V1317H1312Z" fill="url(#cb)" />
      <path d="M1313 1191H1338L1314 1215H1338" fill="none" stroke="#2d6cd4" strokeWidth="1.3" />
      <path d="M1257 1270 1268 1281 1280 1270M1268 1281V1293" fill="none" stroke="#4aa53d" strokeWidth="1.3" />
      <path d="M1392 1273 1416 1297M1416 1273 1392 1297" fill="none" stroke="#c2433a" strokeWidth="1.3" />

      <path d="M1859 570V725" stroke="#6a6ff0" strokeWidth="1.6" />
      <path d="M1816 679 1948 662" stroke="#f07a7a" strokeWidth="1.6" />
      <path d="M1800 658 1890 682" stroke="#8fe87a" strokeWidth="1.6" />
      <rect x="1853" y="667" width="12" height="12" fill="#21272f" stroke="#fff" strokeWidth="1.6" />

      <ellipse cx="2208" cy="432" rx="134" ry="35" fill="#484e57" />
      <ellipse cx="2208" cy="430" rx="101" ry="26" fill="url(#sh)" />
      <text transform="translate(2094 451) rotate(-14) scale(1 .5)" textAnchor="middle" fontFamily="Inter" fontWeight="700" fontSize="40" fill="#a8abaf">W</text>
      <text transform="translate(2288 464) rotate(14) scale(1 .5)" textAnchor="middle" fontFamily="Inter" fontWeight="700" fontSize="40" fill="#a8abaf">S</text>
      <text transform="translate(2304 416) rotate(8) scale(1 .5)" textAnchor="middle" fontFamily="Inter" fontWeight="700" fontSize="32" fill="#a8abaf">E</text>
      <path d="M2142 323 2219 317 2277 325 2195 333Z" fill="#a3a5a8" />
      <path d="M2142 323 2195 333V436L2144 416Z" fill="url(#cf)" />
      <path d="M2195 333 2277 325 2275 422 2195 436Z" fill="url(#cf)" />
      <path d="M2184 352 2211 351V416L2186 414Z" fill="#8e949c" opacity=".7" />
      <path d="M2195 333V436M2142 323 2195 333 2277 325" fill="none" stroke="#6c6f74" strokeWidth="1" />
      <text transform="translate(2168 392) skewY(10)" textAnchor="middle" fontFamily="Inter" fontWeight="700" fontSize="36" textLength="26" lengthAdjust="spacingAndGlyphs" fill="#5f636a">LEFT</text>
      <text transform="translate(2234 395) skewY(-7)" textAnchor="middle" fontFamily="Inter" fontWeight="700" fontSize="35" textLength="58" lengthAdjust="spacingAndGlyphs" fill="#5f636a">FRONT</text>
    </svg>
  )
}

function CommandBox() {
  const lines = ["Command:", "Command:", "Command: LINE", "Specify first point:", "Specify next point or [Undo]:", "Specify next point or [Undo]:"]
  return (
    <div className="absolute bottom-0 left-[500px] flex w-[1000px] flex-col items-end [font-family:'Noto_Sans',sans-serif]">
      <div className="relative h-[185px] w-[920px] bg-[#3c4554] pl-[10px] pt-[6px] text-[20px] text-[#c3c5c9]">
        {lines.map((l, i) => (
          <div key={i} className="h-[30px] leading-[30px]">
            {l}
          </div>
        ))}
        <div className="absolute bottom-[4px] right-[11px] h-[40px] w-[8px] rounded bg-[#8a8f98]"></div>
      </div>
      <div className="flex h-[50px] w-full items-center bg-[#3c4554]">
        <svg width="40" height="24" viewBox="0 0 40 24" className="ml-[15px] block">
          {L("M2 3 9 8 2 13", "#c3c5c9", 1.8)}
          {L("M14 20H27", "#c3c5c9", 2.5)}
          {F("M30 5H39L34.500 12Z", "#c3c5c9")}
        </svg>
        <span className="ml-[35px] text-[23px] italic text-[#8e939b]">Type a command</span>
        <span className="ml-auto mr-[26px]">
          <Caret c="border-t-[#8e939b]" />
        </span>
        <svg width="26" height="28" viewBox="0 0 26 28" className="mr-[20px] block">
          {L("M1 10H25V27H1Z", "#d0d2d6", 2)}
          {L("M9 10V27", "#d0d2d6", 2)}
          {L("M13 4V17", B, 1.5)}
          {F("M8 7 13 0 18 7Z", B)}
        </svg>
      </div>
    </div>
  )
}

const ViewLabel = () => (
  <div className="absolute left-[29px] top-[13px] flex h-[24px] items-center [font-family:'Noto_Sans',sans-serif] text-[23px] tracking-[0.8px] text-[#9ea3a9]">
    <span className="w-[39px] text-[24px] font-light">+</span>
    <span className="h-[26px] w-[2px] bg-[#9ea3a9]"></span>
    <span className="ml-[10px]">Custom View</span>
    <span className="ml-[14px] h-[26px] w-[2px] bg-[#9ea3a9]"></span>
    <span className="ml-[12px] tracking-[1.2px]">X-Ray</span>
  </div>
)

function Viewport() {
  return (
    <div className="relative flex-1 overflow-hidden bg-[#21272f]">
      <Drawing />
      <ViewLabel />
      <div className="absolute left-[1788px] top-[342px] flex h-[24px] w-[100px] items-center justify-between rounded-[8px] bg-[#5d6570] pl-[8px] pr-[10px] text-[21px] text-[#1f2630]">
        <span>WCS</span>
        <svg width="18" height="14" viewBox="0 0 18 14" className="block">
          {L("M1 1H17L9 13Z", "#1f2630", 1.5)}
        </svg>
      </div>
      <CommandBox />
    </div>
  )
}

function Chev() {
  return (
    <svg width="16" height="10" viewBox="0 0 16 10" className="block">
      {L("M1 2 8 8 15 2", "#20262e", 2)}
    </svg>
  )
}

function Field({ v, kind = "select", swatch, line }) {
  if (kind === "disabled") {
    return <div className="flex h-[34px] w-[184px] items-center rounded-[2px] bg-[#434c5c] pl-[8px] text-[#78808c]">{v}</div>
  }
  return (
    <div className={`flex h-[36px] w-[186px] items-center rounded-[3px] border-2 border-[#2c3440] bg-[#4a5568] text-[#e6e7e9] ${kind === "text" ? "pl-[6px]" : "pl-[12px]"}`}>
      {swatch && <span className="mr-[28px] block h-[17px] w-[17px] border-2 border-black bg-[#e84ae8]"></span>}
      {line && <span className="mr-[30px] block h-[2px] w-[64px] bg-[#e6e7e9]"></span>}
      <span>{v}</span>
      {kind === "select" && (
        <span className="ml-auto mr-[9px]">
          <Caret />
        </span>
      )}
    </div>
  )
}

function Row({ label, children, outline }) {
  return (
    <div className={`mr-[9px] ml-[20px] flex h-[46px] items-center border ${outline ? "border-[#343b47]" : "border-transparent"}`}>
      <span className="ml-[65px] w-[171px] whitespace-nowrap text-right text-[#bcc0c6]">{label}</span>
      <span className="ml-[21px] shrink-0">{children}</span>
    </div>
  )
}

function Head({ t }) {
  return (
    <div className="flex h-[62px] items-center font-bold text-[#c5c8cd]">
      <span className="ml-[27px] w-[38px]">
        <Chev />
      </span>
      {t}
    </div>
  )
}

function PropsPanel() {
  return (
    <div className="flex w-[510px] shrink-0 flex-col border-l-2 border-[#262c35] bg-[#3c4554] text-[22px]">
      <div className="flex h-[44px] shrink-0 bg-[#2d3440]">
        <div className="flex w-[103px] items-center justify-center bg-[#3c4554]">
          <svg width="34" height="36" viewBox="0 0 34 36" className="block">
            {F("M8 2H28L22 11H2Z", "#d2d2d2")}
            {F("M4 14H24L20 19H0Z", "#d2d2d2")}
            {F("M4 22H20L17 27H0Z", "#d2d2d2")}
            {Ci(25, 26, 8, "#f0f0f0", 0, "#f0f0f0")}
            {L("M25 22V31", "#2d3440", 3)}
          </svg>
        </div>
        <div className="flex w-[106px] items-center justify-center border-r-2 border-[#262c35]">
          <svg width="34" height="34" viewBox="0 0 34 34" className="block">
            {F("M6 12H22L32 18V32H2V18H6Z", "#d8d8d8")}
            <ellipse cx="7" cy="10" rx="5" ry="9" fill="#2d3440" stroke="#d8d8d8" strokeWidth="2" />
          </svg>
        </div>
        <div className="flex w-[105px] items-center justify-center border-r-2 border-[#262c35]">
          <svg width="34" height="36" viewBox="0 0 34 36" className="block overflow-visible">
            {F("M2 8H26V34H2Z", "#d8d8d8")}
            {L("M5 15H23M5 21H23M5 27H23M10 13V28M17 13V28", "#3c4554", 2)}
            {Dot(28, 6, 10)}
          </svg>
        </div>
        <div className="w-[146px]"></div>
        <div className="flex flex-1 items-center justify-center border-l-2 border-[#262c35] bg-[#3c4554] text-[22px] text-[#9aa0a8]">»</div>
      </div>
      <div className="flex h-[44px] shrink-0 items-center pb-[13px] pl-[19px]">
        <span className="text-[24px] text-[#e4e5e8]">Properties</span>
        <div className="ml-[139px] flex h-[28px] w-[119px] rounded-[3px] border-2 border-[#2c3440] text-[16px]">
          <span className="flex flex-1 items-center justify-center bg-[#5b6980] font-medium text-[#eef0f2]">All</span>
          <span className="flex flex-1 items-center justify-center bg-[#465064] text-[#8e96a3]">My</span>
        </div>
        <svg width="30" height="30" viewBox="0 0 30 30" className="ml-[20px] block">
          {L("M3 1H20V28H3Z", "#8b919b", 2)}
          {L("M7 8H16M7 13H16M7 18H12", "#8b919b", 2)}
          {F("M14 26 24 14 29 19 18 29Z", "#8b919b")}
        </svg>
        <svg width="28" height="30" viewBox="0 0 28 30" className="ml-[20px] block">
          {L("M10 1H27V29H10", "#e4e5e8", 2)}
          {L("M1 15H16", "#e4e5e8", 2)}
          {F("M0 15 6 10V20Z", "#e4e5e8")}
        </svg>
      </div>
      <div className="mx-[21px] mt-[5px] flex h-[41px] shrink-0 items-center justify-between rounded-[3px] bg-[#465064] pl-[12px] pr-[10px] text-[#78808c]">
        <span>Model Space</span>
        <Caret c="border-t-[#78808c]" />
      </div>
      <div className="relative mt-[8px] flex-1 overflow-hidden">
        <div className="absolute right-[19px] top-[3px] h-[855px] w-[10px] rounded-[5px] bg-[#7f8794]"></div>
        <Head t="General" />
        <Row label="Color" outline>
          <Field v="ByLayer" swatch />
        </Row>
        <Row label="Layer">
          <Field v="hiperboloide" />
        </Row>
        <Row label="Linetype">
          <Field v="By..." line />
        </Row>
        <Row label="Linetype scale">
          <Field v="1.000" kind="text" />
        </Row>
        <Row label="Lineweight">
          <Field v="ByLayer" />
        </Row>
        <Row label="Transparency">
          <div className="flex h-[36px] w-[186px] gap-[8px] pl-[6px]">
            <div className="relative flex w-[95px] items-center justify-end rounded-[3px] border-2 border-[#2c3440] bg-[#4a5568] pr-[3px] text-[#e6e7e9]">
              <span className="absolute bottom-[1px] left-0 top-[1px] w-[2px] bg-[#6b9fe0]"></span>
              <span className="absolute bottom-[3px] left-[42px] h-[10px] w-[1px] bg-[#7f8794]"></span>
              0
            </div>
            <div className="flex flex-1 items-center rounded-[3px] border-2 border-[#2c3440] bg-[#4a5568] pl-[7px]">
              <svg width="24" height="20" viewBox="0 0 24 20" className="block">
                {F("M6 0H24L18 7H1Z", B)}
                {F("M3 9H20L15 14H0Z", "#d2d2d2")}
                {F("M3 15H17L14 20H0Z", "#d2d2d2")}
              </svg>
              <span className="ml-auto mr-[7px]">
                <Caret />
              </span>
            </div>
          </div>
        </Row>
        <Head t="Annotation" />
        <Row label="Text style"><Field v="Standard" /></Row>
        <Row label="Dimension style"><Field v="Standard" /></Row>
        <Row label="Detail View style"><Field v="Imperial24" /></Row>
        <Row label="Multileader style"><Field v="Standard" /></Row>
        <Row label="Section View st..."><Field v="Imperial24" /></Row>
        <Row label="Table style"><Field v="Standard" /></Row>
        <Row label="Annotation scale"><Field v="1:1" /></Row>
        <Row label="Text height">
          <div className="flex h-[36px] w-[186px] gap-[6px]">
            <div className="flex w-[140px] items-center rounded-[3px] border-2 border-[#2c3440] bg-[#4a5568] pl-[6px] text-[#e6e7e9]">0.200</div>
            <div className="flex flex-1 items-center justify-center rounded-[3px] border-2 border-[#2c3440] bg-[#3c4554]">
              <svg width="32" height="28" viewBox="0 0 32 28" className="block">
                {L("M2 2V24M30 2V12", "#e6e7e9", 2)}
                {L("M5 7H27", B, 1.5)}
                {L("M16 20H30M22 14V26M26 14V26M18 18H28M18 22H28", "#e6e7e9", 1.5)}
              </svg>
            </div>
          </div>
        </Row>
        <Head t="Plot Style" />
        <Row label="Plot style"><Field v="ByColor" /></Row>
        <Row label="Plot style table"><Field v="None" /></Row>
        <Row label="Plot style attach..."><Field v="Model" kind="disabled" /></Row>
        <Row label="Plot table type"><Field v="Not available" kind="disabled" /></Row>
        <Head t="UCS" />
        <Row label="UCS Name"><Field v="" kind="disabled" /></Row>
        <div className="flex h-[46px] items-center pl-[282px] text-[#e6e7e9]">
          <span className="flex h-[24px] w-[26px] items-center justify-center rounded-[3px] bg-[#8ea0c4]">
            <svg width="16" height="10" viewBox="0 0 16 10" className="block">
              {L("M1 3 7 8 15 1", "#20262e", 2.5)}
            </svg>
          </span>
          <span className="ml-[10px]">UCS per vie...</span>
        </div>
        <Head t="3D Visualization" />
        <Row label="Material"><Field v="ByLayer" /></Row>
        <Row label="Shadow Display"><Field v="Casts and R..." /></Row>
        <Head t="Visual Style" />
        <Row label=""><Field v="" kind="disabled" /></Row>
      </div>
    </div>
  )
}

const statusIcons = [
  { d: <>{L("M10 4V36M19 4V36M28 4V36M4 11H36M4 20H36M4 29H36", W, 2)}</> },
  { d: <>{[9, 20, 31].map((x) => [8, 20, 32].map((y) => <rect key={x + "-" + y} x={x - 2} y={y - 2} width="4" height="4" fill={W} />))}</> },
  { on: 1, d: <>{L("M5 3V35H37", W, 2.5)}{L("M5 24H15V35", W, 2)}</> },
  { d: <>{Ci(18, 24, 11, G)}{L("M15 32 30 5M16 24H38M26 14l5 8", G, 2)}</> },
  { on: 1, d: <>{L("M5 15H19M12 8V22", W, 3)}{Rc(16, 24, 20, 10, W)}{Rc(26, 26, 8, 6, "#6a90bd")}</> },
  { d: <>{Rc(6, 7, 30, 5, W)}{Rc(6, 12, 20, 5, W)}{Rc(6, 19, 30, 5, W)}{Rc(6, 24, 14, 2, W)}{Rc(6, 31, 16, 8, W)}{Rc(22, 31, 14, 3, W)}</> },
  { on: 1, d: <><rect x="6" y="5" width="28" height="31" fill="none" stroke={W} strokeWidth="2.5" /><path d="M9 8h22v25H9Z" fill={W} fillOpacity=".55" /><path d="M9 8h22v25H9Z" fill="none" stroke={W} strokeDasharray="3 3" strokeWidth="6" /></> },
  { on: 1, d: <>{L("M8 5H4V35H8M24 5H28V12", W, 2.5)}<rect x="10" y="7" width="14" height="25" fill="none" stroke={W} strokeWidth="2" />{Ci(17, 21, 4, W, 2)}{F("M22 20 36 32 29 33 27 40Z", W)}</> },
  { on: 1, d: <>{L("M6 33H36M6 33 26 8", W, 2.5)}{Sq(20, 18, W, 6)}</> },
  { on: 1, d: <>{L("M10 8H35V35H8V13", W, 2.5)}<rect x="5" y="4" width="9" height="9" fill="#6a90bd" stroke={W} strokeWidth="2" /></> },
  { on: 1, d: <>{Ci(28, 12, 8, W, 0, W)}{F("M13 5 17 22 24 36 15 32 11 36 8 32 2 36 9 22Z", W)}</> },
  { d: <>{F("M14 5 18 22 24 38 15 33 14 38 13 33 4 38 10 22Z", G)}{F("M30 4 27 13H31L26 24 28 15H24Z", Y)}</> },
  { d: <>{F("M20 5 24 22 32 38 22 33 20 38 18 33 8 38 16 22Z", G)}</> },
]

function StatusBar() {
  return (
    <div className="flex h-[47px] shrink-0 items-stretch border-t-2 border-[#262c35] bg-[#3c4554] text-[#aeb1b6]">
      <div className="flex w-[119px] items-center justify-center border-r-2 border-[#262c35] bg-[#4d5a70] pb-[4px] pr-[5px] text-[21px] font-semibold text-[#eceef0]">Model</div>
      <div className="flex w-[47px] items-center justify-center border-r-2 border-[#262c35]">
        <svg width="24" height="24" viewBox="0 0 24 24" className="block">
          {L("M0 12H24M12 0V24", "#c9ccd0", 1.8)}
        </svg>
      </div>
      <div className="flex w-[118px] items-center justify-center border-r-2 border-[#262c35] pb-[4px] [font-family:'Noto_Sans',sans-serif] text-[21px]">Layout1</div>
      <div className="flex w-[118px] items-center justify-center border-r-2 border-[#262c35] pb-[4px] [font-family:'Noto_Sans',sans-serif] text-[21px]">Layout2</div>
      <div className="ml-auto flex items-center border-l-2 border-[#262c35] pl-[18px] pr-[8px]">
        <span className="w-[232px] -translate-x-[3px] whitespace-nowrap text-[22.500px] text-[#b3b6bb]">16.376, 16.846, 0.000</span>
        {statusIcons.map((s, i) => (
          <span key={i} className={`mx-[2px] block h-[40px] w-[40px] ${s.on ? "bg-[#6a90bd]" : ""}`}>
            <svg width="40" height="40" viewBox="0 0 40 40" className="block">
              {s.d}
            </svg>
          </span>
        ))}
        <span className="ml-[2px] flex w-[56px] items-center gap-[6px] text-[23px]">
          1:1
          <Caret c="border-t-[#c9ccd0]" />
        </span>
        <svg width="40" height="40" viewBox="0 0 40 40" className="ml-[2px] block">
          {L("M5 2H17V16H5Z", G, 2)}
          {Ci(28, 20, 7, G, 2)}
          {L("M11 24 3 38H19Z", G, 2)}
        </svg>
        <span className="ml-[5px]">
          <Gear s={36} c="#d8d8d8" />
        </span>
      </div>
    </div>
  )
}

// spiky tree tops along the bottom edge, lighter around the olive patches
const patches = [[480, "#2c2f12"], [760, "#33361a"], [1180, "#2a2d10"], [1470, "#3a3c16"], [1680, "#34300f"], [2030, "#1f2c16"], [2400, "#1d2b15"], [2700, "#1c2814"]]
const trees = []
for (let i = 0; i < 260; i++) {
  const x = (i * 379) % 2880
  const y = 4 + ((i * 53) % 20)
  const p = patches.find((q) => Math.abs(q[0] - x) < 70)
  trees.push({ x, y, c: p ? p[1] : i % 3 ? "#191a11" : "#1e2014" })
}

function Wallpaper() {
  return (
    <svg width="2880" height="31" viewBox="0 0 2880 31" className="block">
      <rect width="2880" height="31" fill="#12130d" />
      {trees.map((t, i) => (
        <path key={i} d={`M${t.x} ${t.y}l9 ${31 - t.y}h-18z`} fill={t.c} />
      ))}
    </svg>
  )
}

export default function App() {
  return (
    <div className="flex h-[1800px] w-[2880px] flex-col overflow-hidden bg-[linear-gradient(#e9e8e3_0,#e9e8e3_900px,#14150e_900px)] [font-family:Inter,sans-serif]">
      <MacBar />
      <div className="flex h-[1721px] shrink-0 flex-col overflow-hidden rounded-[20px] border-t border-b border-[#6c7482] bg-[#3c4554]">
        <TitleRow />
        <Toolbar />
        <div className="h-[2px] shrink-0 bg-[#262c35]"></div>
        <div className="flex min-h-0 flex-1">
          <LeftPanel />
          <div className="flex min-w-0 flex-1 flex-col border-l-2 border-[#262c35]">
            <div className="flex min-h-0 flex-1">
              <div className="flex min-w-0 flex-1 flex-col">
                <DocTabs />
                <Viewport />
              </div>
              <PropsPanel />
            </div>
            <StatusBar />
          </div>
        </div>
      </div>
      <Wallpaper />
    </div>
  )
}
